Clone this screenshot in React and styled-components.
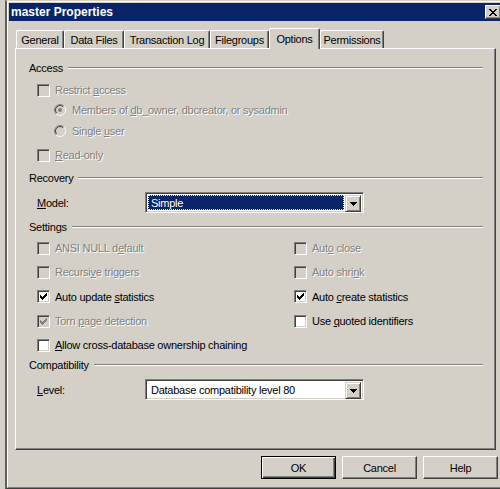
import React from 'react';
import styled, { createGlobalStyle, css } from 'styled-components';

const FACE = '#d4d0c8';
const NAVY = '#0a246a';

const GlobalStyle = createGlobalStyle`
  html, body {
    margin: 0;
    padding: 0;
    background: ${FACE};
  }
  body {
    font-family: 'Liberation Sans', Arial, sans-serif;
    font-size: 11px;
    letter-spacing: -0.25px;
    color: #000;
  }
`;

const Screen = styled.div`
  width: 500px;
  height: 489px;
  overflow: hidden;
  background: ${FACE};
`;

const Window = styled.div`
  box-sizing: border-box;
  width: 498px;
  height: 489px;
  margin-left: 5px;
  display: flex;
  border-top: 1px solid ${FACE};
  border-left: 2px solid #5f5f5f;
  border-bottom: 1px solid #404040;
`;

const Frame = styled.div`
  flex: 1;
  display: flex;
  flex-direction: column;
  border-top: 1px solid #fff;
  border-left: 1px solid #fff;
  border-bottom: 1px solid #808080;
  padding: 1px 0 0 1px;
`;

const TitleBar = styled.div`
  height: 18px;
  flex-shrink: 0;
  display: flex;
  align-items: center;
  justify-content: space-between;
  padding: 0 2px;
  background: ${NAVY};
`;

const TitleText = styled.span`
  color: #fff;
  font-weight: bold;
  font-size: 12px;
  letter-spacing: 0;
`;

const CloseButton = styled.div`
  box-sizing: border-box;
  width: 16px;
  height: 14px;
  display: flex;
  align-items: center;
  justify-content: center;
  background: ${FACE};
  border: 1px solid;
  border-color: #fff #404040 #404040 #fff;
  box-shadow: inset -1px -1px #808080;
`;

const Body = styled.div`
  flex: 1;
  display: flex;
  flex-direction: column;
  padding: 7px 5px 0 6px;
`;

const TabStrip = styled.div`
  height: 20px;
  display: flex;
  align-items: flex-end;
  padding-left: 1px;
`;

const Tab = styled.div`
  box-sizing: border-box;
  width: ${p => p.$w}px;
  height: ${p => (p.$active ? 21 : 18)}px;
  margin-bottom: ${p => (p.$active ? -1 : 0)}px;
  padding: ${p => (p.$active ? '0 0 1px' : '1px 0 0')};
  position: relative;
  z-index: ${p => (p.$active ? 1 : 0)};
  display: flex;
  align-items: center;
  justify-content: center;
  background: ${FACE};
  border-top: 1px solid #fff;
  border-left: 1px solid #fff;
  border-right: 1px solid #404040;
  border-top-left-radius: 2px;
  border-top-right-radius: 2px;
  box-shadow: inset -1px 0 #808080;
  white-space: nowrap;
`;

const Panel = styled.div`
  box-sizing: border-box;
  width: 481px;
  height: 402px;
  display: flex;
  flex-direction: column;
  padding: 9px 12px 0 13px;
  border-top: 1px solid #fff;
  border-left: 1px solid #fff;
  border-right: 1px solid #404040;
  border-bottom: 1px solid #404040;
  box-shadow: inset -1px -1px #808080;
`;

const GroupHeader = styled.div`
  height: ${p => p.$h || 20}px;
  margin-top: ${p => p.$mt || 0}px;
  display: flex;
  align-items: center;
  flex-shrink: 0;
`;

const Rule = styled.div`
  flex: 1;
  height: 0;
  margin-left: 5px;
  border-top: 1px solid #808080;
  border-bottom: 1px solid #fff;
`;

const Row = styled.div`
  height: ${p => p.$h || 20}px;
  margin-top: ${p => p.$mt || 0}px;
  margin-left: ${p => p.$indent || 0}px;
  display: flex;
  align-items: center;
  flex-shrink: 0;
`;

const Text = styled.span`
  white-space: nowrap;
  ${p =>
    p.$disabled &&
    css`
      color: #808080;
      text-shadow: 1px 1px 0 #fff;
    `}
`;

const U = styled.span`
  text-decoration: underline;
`;

const Box = styled.div`
  box-sizing: border-box;
  width: 13px;
  height: 13px;
  flex-shrink: 0;
  margin-right: 5px;
  display: flex;
  align-items: center;
  justify-content: center;
  background: ${p => (p.$disabled ? FACE : '#fff')};
  border: 1px solid;
  border-color: #808080 #fff #fff #808080;
  box-shadow: inset 1px 1px #404040, inset -1px -1px ${FACE};
`;

const RadioWrap = styled.svg`
  flex-shrink: 0;
  margin-right: 6px;
`;

const SettingsGrid = styled.div`
  display: grid;
  grid-template-columns: 257px 1fr;
  grid-template-rows: 24px 24px 25px 24px 24px;
  margin-left: 8px;
  flex-shrink: 0;
`;

const Cell = styled.div`
  display: flex;
  align-items: center;
`;

const FieldLabel = styled.div`
  width: 108px;
  margin-left: 8px;
  flex-shrink: 0;
`;

const Combo = styled.div`
  box-sizing: border-box;
  width: 219px;
  height: 21px;
  display: flex;
  padding: 1px;
  background: #fff;
  border: 1px solid;
  border-color: #808080 #fff #fff #808080;
  box-shadow: inset 1px 1px #404040, inset -1px -1px ${FACE};
`;

const ComboValue = styled.div`
  flex: 1;
  margin: 1px 1px 1px 1px;
  padding-left: 2px;
  display: flex;
  align-items: center;
  white-space: nowrap;
  ${p =>
    p.$selected
      ? css`
          background: ${NAVY};
          color: #fff;
          border: 1px dotted #efe9a8;
        `
      : css`
          border: 1px solid transparent;
        `}
`;

const DropButton = styled.div`
  box-sizing: border-box;
  width: 16px;
  height: 17px;
  margin: 1px 1px 1px 0;
  display: flex;
  align-items: center;
  justify-content: center;
  background: ${FACE};
  border: 1px solid;
  border-color: ${FACE} #404040 #404040 ${FACE};
  box-shadow: inset 1px 1px #fff, inset -1px -1px #808080;
`;

const ButtonRow = styled.div`
  display: flex;
  justify-content: flex-end;
  gap: 6px;
  margin-top: 6px;
`;

const Button = styled.button`
  box-sizing: border-box;
  width: 75px;
  height: 23px;
  padding: 0;
  font: inherit;
  letter-spacing: inherit;
  color: #000;
  background: ${FACE};
  border: 1px solid;
  ${p =>
    p.$default
      ? css`
          border-color: #000;
          box-shadow: inset 1px 1px #fff, inset -1px -1px #404040, inset -2px -2px #808080;
        `
      : css`
          border-color: #fff #404040 #404040 #fff;
          box-shadow: inset -1px -1px #808080;
        `}
`;

const CheckMark = ({ color }) => (
  <svg width="7" height="7" viewBox="0 0 7 7">
    <path
      fill={color}
      d="M0 2h1v3H0z M1 3h1v3H1z M2 4h1v3H2z M3 3h1v3H3z M4 2h1v3H4z M5 1h1v3H5z M6 0h1v3H6z"
    />
  </svg>
);

const Arrow = () => (
  <svg width="7" height="4" viewBox="0 0 7 4">
    <path fill="#000" d="M0 0h7v1H0z M1 1h5v1H1z M2 2h3v1H2z M3 3h1v1H3z" />
  </svg>
);

const CloseGlyph = () => (
  <svg width="8" height="7" viewBox="0 0 8 7">
    <path
      fill="#000"
      d="M0 0h2v1H0z M6 0h2v1H6z M1 1h2v1H1z M5 1h2v1H5z M2 2h4v1H2z M3 3h2v1H3z M2 4h4v1H2z M1 5h2v1H1z M5 5h2v1H5z M0 6h2v1H0z M6 6h2v1H6z"
    />
  </svg>
);

const Checkbox = ({ checked, disabled, children }) => (
  <>
    <Box $disabled={disabled}>
      {checked && <CheckMark color={disabled ? '#808080' : '#000'} />}
    </Box>
    <Text $disabled={disabled}>{children}</Text>
  </>
);

const Radio = ({ selected, disabled, children }) => (
  <>
    <RadioWrap width="12" height="12" viewBox="0 0 12 12">
      <circle cx="6" cy="6" r="4.2" fill={disabled ? FACE : '#fff'} />
      <path d="M2.111 9.889A5.5 5.5 0 0 1 9.889 2.111" fill="none" stroke="#808080" />
      <path d="M9.889 2.111A5.5 5.5 0 0 1 2.111 9.889" fill="none" stroke="#fff" />
      <path d="M2.818 9.182A4.5 4.5 0 0 1 9.182 2.818" fill="none" stroke="#404040" />
      <path d="M9.182 2.818A4.5 4.5 0 0 1 2.818 9.182" fill="none" stroke={FACE} />
      {selected && <circle cx="6" cy="6" r="2" fill={disabled ? '#808080' : '#000'} />}
    </RadioWrap>
    <Text $disabled={disabled}>{children}</Text>
  </>
);

const tabs = [
  { label: 'General', w: 48 },
  { label: 'Data Files', w: 60 },
  { label: 'Transaction Log', w: 86 },
  { label: 'Filegroups', w: 59 },
  { label: 'Options', w: 51, active: true },
  { label: 'Permissions', w: 64 },
];

const App = () => (
  <Screen>
    <GlobalStyle />
    <Window>
      <Frame>
        <TitleBar>
          <TitleText>master Properties</TitleText>
          <CloseButton>
            <CloseGlyph />
          </CloseButton>
        </TitleBar>
        <Body>
          <TabStrip>
            {tabs.map(t => (
              <Tab key={t.label} $w={t.w} $active={t.active}>
                {t.label}
              </Tab>
            ))}
          </TabStrip>
          <Panel>
            <GroupHeader>
              <Text>Access</Text>
              <Rule />
            </GroupHeader>
            <Row $mt={2} $indent={8}>
              <Checkbox disabled>
                Restrict <U>a</U>ccess
              </Checkbox>
            </Row>
            <Row $indent={25}>
              <Radio selected disabled>
                Members of <U>d</U>b_owner, dbcreator, or sysadmin
              </Radio>
            </Row>
            <Row $mt={1} $indent={25}>
              <Radio disabled>
                Single <U>u</U>ser
              </Radio>
            </Row>
            <Row $mt={4} $indent={8}>
              <Checkbox disabled>
                <U>R</U>ead-only
              </Checkbox>
            </Row>

            <GroupHeader $mt={3}>
              <Text>Recovery</Text>
              <Rule />
            </GroupHeader>
            <Row $mt={4} $h={21}>
              <FieldLabel>
                <U>M</U>odel:
              </FieldLabel>
              <Combo>
                <ComboValue $selected>Simple</ComboValue>
                <DropButton>
                  <Arrow />
                </DropButton>
              </Combo>
            </Row>

            <GroupHeader $mt={5} $h={18}>
              <Text>Settings</Text>
              <Rule />
            </GroupHeader>
            <SettingsGrid>
              <Cell>
                <Checkbox disabled>
                  ANSI NULL d<U>e</U>fault
                </Checkbox>
              </Cell>
              <Cell>
                <Checkbox disabled>
                  Aut<U>o</U> close
                </Checkbox>
              </Cell>
              <Cell>
                <Checkbox disabled>
                  Recursi<U>v</U>e triggers
                </Checkbox>
              </Cell>
              <Cell>
                <Checkbox disabled>
                  Auto shri<U>n</U>k
                </Checkbox>
              </Cell>
              <Cell>
                <Checkbox checked>
                  Auto update <U>s</U>tatistics
                </Checkbox>
              </Cell>
              <Cell>
                <Checkbox checked>
                  Auto <U>c</U>reate statistics
                </Checkbox>
              </Cell>
              <Cell>
                <Checkbox checked disabled>
                  Torn <U>p</U>age detection
                </Checkbox>
              </Cell>
              <Cell>
                <Checkbox>
                  Use <U>q</U>uoted identifiers
                </Checkbox>
              </Cell>
              <Cell>
                <Checkbox>
                  <U>A</U>llow cross-database ownership chaining
                </Checkbox>
              </Cell>
            </SettingsGrid>

            <GroupHeader $h={16}>
              <Text>Compatibility</Text>
              <Rule />
            </GroupHeader>
            <Row $mt={6} $h={21}>
              <FieldLabel>
                <U>L</U>evel:
              </FieldLabel>
              <Combo>
                <ComboValue>Database compatibility level 80</ComboValue>
                <DropButton>
                  <Arrow />
                </DropButton>
              </Combo>
            </Row>
          </Panel>
          <ButtonRow>
            <Button $default>OK</Button>
            <Button>Cancel</Button>
            <Button>Help</Button>
          </ButtonRow>
        </Body>
      </Frame>
    </Window>
  </Screen>
);

export default App;
